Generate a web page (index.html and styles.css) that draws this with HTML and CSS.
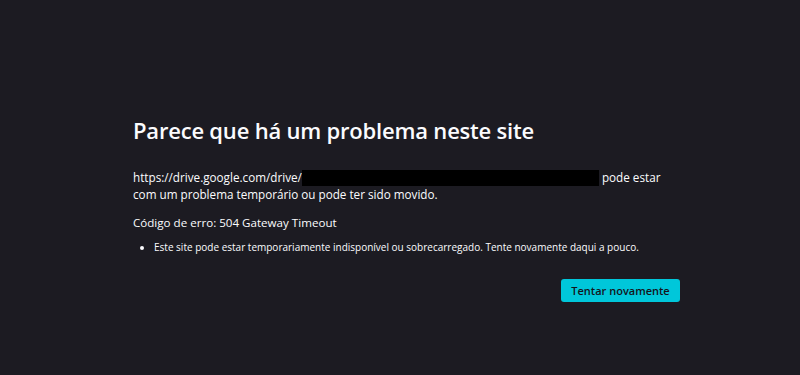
FILE: index.html
```html
<!DOCTYPE html>
<html lang="pt">
<head>
<meta charset="utf-8">
<link rel="stylesheet" href="styles.css">
</head>
<body>
<main class="container">
  <h1 class="title">Parece que há um problema neste site</h1>
  <p class="desc"><span>https://drive.google.com/drive/</span><span class="redact"></span> <span>pode estar</span> <span>com um problema temporário ou pode ter sido movido.</span></p>
  <p class="code">Código de erro: 504 Gateway Timeout</p>
  <ul class="list">
    <li>Este site pode estar temporariamente indisponível ou sobrecarregado. Tente novamente daqui a pouco.</li>
  </ul>
  <div class="actions">
    <button class="retry">Tentar novamente</button>
  </div>
</main>
</body>
</html>
```
FILE: styles.css
```css
html, body {
  margin: 0;
  height: 100%;
  background: #1c1b22;
  color: #fbfbfe;
  font-family: "Open Sans", "Noto Sans", sans-serif;
}
.container {
  width: 547px;
  padding: 112px 0 0 133px;
  display: flex;
  flex-direction: column;
}
.title {
  margin: 0;
  font-size: 22px;
  font-weight: 600;
  line-height: 36px;
  letter-spacing: -0.2px;
}
.desc {
  margin: 21px 0 0;
  font-size: 11.7px;
  line-height: 17px;
}
.redact {
  display: inline-block;
  width: 297px;
  height: 16px;
  background: #000;
  vertical-align: -4px;
}
.code {
  margin: 11px 0 0;
  font-size: 11.6px;
  line-height: 17px;
}
.list {
  margin: 9px 0 0;
  padding-left: 21px;
  font-size: 10px;
  line-height: 15px;
}
.actions {
  display: flex;
  justify-content: flex-end;
  margin-top: 24px;
}
.retry {
  width: 119px;
  height: 23px;
  border: none;
  border-radius: 3px;
  background: #00c7da;
  color: #15141a;
  font-family: inherit;
  font-size: 11px;
  font-weight: 600;
  padding: 0;
}
```
